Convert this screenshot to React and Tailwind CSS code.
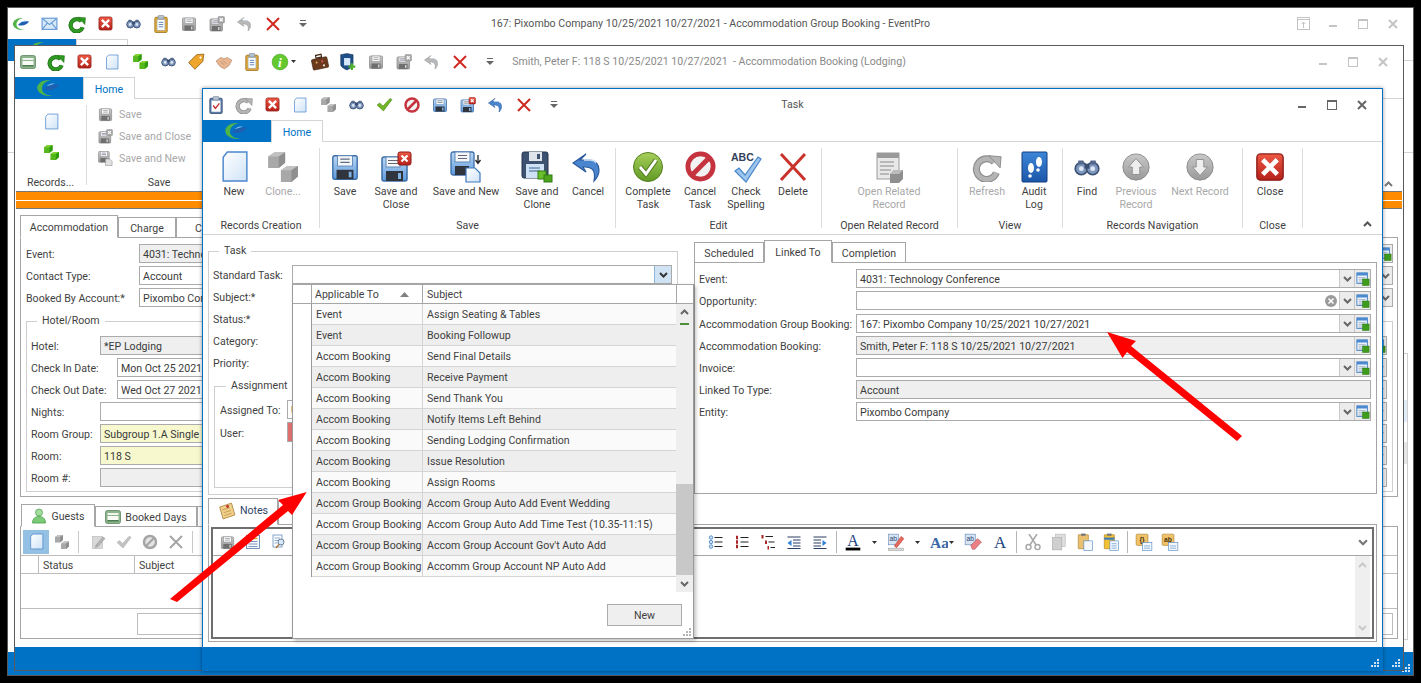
const Svg = ({ s = 16, w, h, vb = '0 0 32 32', children }) => (
  <svg width={w || s} height={h || s} viewBox={vb} className="block shrink-0">{children}</svg>
);

const Defs = () => (
  <svg width="0" height="0" className="absolute">
    <defs>
      <linearGradient id="gBlue" x1="0" y1="0" x2="0" y2="1"><stop offset="0" stopColor="#bcd8f3" /><stop offset="1" stopColor="#5d9ade" /></linearGradient>
      <linearGradient id="gPage" x1="0" y1="0" x2="1" y2="1"><stop offset="0" stopColor="#ffffff" /><stop offset="1" stopColor="#cfe3f7" /></linearGradient>
      <linearGradient id="gRed" x1="0" y1="0" x2="0" y2="1"><stop offset="0" stopColor="#ee5a45" /><stop offset="1" stopColor="#b5201a" /></linearGradient>
      <linearGradient id="gGreen" x1="0" y1="0" x2="0" y2="1"><stop offset="0" stopColor="#a6cf5a" /><stop offset="1" stopColor="#5f9a24" /></linearGradient>
      <linearGradient id="gGrey" x1="0" y1="0" x2="0" y2="1"><stop offset="0" stopColor="#c9c9c9" /><stop offset="1" stopColor="#999999" /></linearGradient>
      <linearGradient id="gBook" x1="0" y1="0" x2="0" y2="1"><stop offset="0" stopColor="#3d86d8" /><stop offset="1" stopColor="#1c56a8" /></linearGradient>
    </defs>
  </svg>
);

const Logo = ({ w = 18, h = 16 }) => (
  <Svg w={w} h={h} vb="0 0 36 30">
    <path d="M22 3C9 2 1 9 2 16c1 7 11 12 24 11-9-1-17-4-17-11S15 5 22 3z" fill="#4fb548" />
    <path d="M12 17c5-7 14-8 22-7-3 6-12 10-22 7z" fill="#1f5fb0" />
    <path d="M16 12c4-3 8-4 12-4-3 2-7 3-12 4z" fill="#8fc7ef" />
  </Svg>
);
const Mail = () => (
  <Svg s={17}><rect x="2" y="6" width="28" height="21" fill="#d6e8fa" stroke="#5b94d2" strokeWidth="2" /><path d="M3 7l13 11L29 7M3 26l9-11M29 26l-9-11" fill="none" stroke="#5b94d2" strokeWidth="2" /></Svg>
);
const Refresh = ({ s = 18, c = '#2f9a22', d = '#1c6d14' }) => (
  <Svg s={s}>
    <path d="M24 11A11 11 0 1 0 26 22" fill="none" stroke={d} strokeWidth="7.5" />
    <path d="M24 11A11 11 0 1 0 26 22" fill="none" stroke={c} strokeWidth="5" />
    <path d="M18 4l13 1-1 12z" fill={c} stroke={d} strokeWidth="1" />
  </Svg>
);
const RedBox = ({ s = 16 }) => (
  <Svg s={s}>
    <rect x="2" y="2" width="28" height="28" rx="4" fill="url(#gRed)" stroke="#8e1d16" strokeWidth="1.5" />
    <path d="M10 10l12 12M22 10L10 22" stroke="#fff" strokeWidth="5" strokeLinecap="square" />
  </Svg>
);
const Binoc = ({ s = 16 }) => (
  <Svg s={s}>
    <circle cx="9" cy="18" r="7.5" fill="#7e97bd" stroke="#3b4f72" strokeWidth="2" />
    <circle cx="23" cy="18" r="7.5" fill="#7e97bd" stroke="#3b4f72" strokeWidth="2" />
    <circle cx="9" cy="18" r="3" fill="#dfe8f4" /><circle cx="23" cy="18" r="3" fill="#dfe8f4" />
    <rect x="13" y="12" width="6" height="6" fill="#3b4f72" />
    <rect x="5" y="8" width="7" height="5" rx="1" fill="#56698c" /><rect x="20" y="8" width="7" height="5" rx="1" fill="#56698c" />
  </Svg>
);
const Clipboard = () => (
  <Svg s={18}>
    <rect x="5" y="4" width="22" height="27" rx="2" fill="#e0ab3c" stroke="#a2741c" strokeWidth="1.5" />
    <rect x="9" y="8" width="14" height="19" fill="#fff" stroke="#8aa3c4" />
    <rect x="11" y="1" width="10" height="6" rx="1" fill="#b9c4d2" stroke="#6e7c8f" />
    <path d="M12 13h8M12 17h8M12 21h8" stroke="#4f78b0" strokeWidth="1.6" />
  </Svg>
);
const ClipCheck = () => (
  <Svg s={18}>
    <rect x="5" y="4" width="22" height="27" rx="2" fill="#5d7ca8" stroke="#384f73" strokeWidth="1.5" />
    <rect x="8" y="8" width="16" height="20" fill="#fff" />
    <rect x="11" y="1" width="10" height="6" rx="1" fill="#b9c4d2" stroke="#6e7c8f" />
    <path d="M11 17l4 5 7-9" fill="none" stroke="#c4302b" strokeWidth="2.5" />
  </Svg>
);
const Floppy = ({ s = 16, grey }) => (
  <Svg s={s}>
    <rect x="3" y="4" width="26" height="25" rx="2" fill={grey ? 'url(#gGrey)' : 'url(#gBlue)'} stroke={grey ? '#8c8c8c' : '#3d6ea8'} strokeWidth="1.5" />
    <rect x="8" y="4" width="16" height="11" fill="#f4f6f8" stroke={grey ? '#8c8c8c' : '#5f87b8'} />
    <path d="M11 7.5h10M11 11h10" stroke={grey ? '#8c8c8c' : '#5f6f85'} strokeWidth="1.3" />
    <rect x="7" y="19" width="18" height="10" fill={grey ? '#6f6f6f' : '#30343c'} />
    <rect x="20" y="21" width="3" height="6" fill={grey ? '#d0d0d0' : '#7fb3e6'} />
  </Svg>
);
const FloppyX = ({ s = 16, grey }) => (
  <Svg s={s}>
    <rect x="2" y="6" width="25" height="24" rx="2" fill={grey ? 'url(#gGrey)' : 'url(#gBlue)'} stroke={grey ? '#8c8c8c' : '#3d6ea8'} strokeWidth="1.5" />
    <rect x="6" y="6" width="14" height="10" fill="#f4f6f8" stroke={grey ? '#8c8c8c' : '#5f87b8'} />
    <path d="M8 9.5h10M8 12.5h10" stroke="#667" strokeWidth="1.2" />
    <rect x="6" y="20" width="17" height="10" fill={grey ? '#6f6f6f' : '#30343c'} />
    <rect x="18" y="22" width="3" height="6" fill={grey ? '#d0d0d0' : '#7fb3e6'} />
    <rect x="18" y="1" width="13" height="13" rx="2" fill={grey ? '#a8a8a8' : 'url(#gRed)'} stroke={grey ? '#8c8c8c' : '#8e1d16'} />
    <path d="M21.5 4.5l6 6M27.5 4.5l-6 6" stroke="#fff" strokeWidth="2.2" />
  </Svg>
);
const FloppyNew = ({ s = 32, grey }) => (
  <Svg s={s}>
    <rect x="1" y="1" width="23" height="23" rx="2" fill={grey ? 'url(#gGrey)' : 'url(#gBlue)'} stroke={grey ? '#8c8c8c' : '#3d6ea8'} strokeWidth="1.3" />
    <rect x="5" y="1" width="15" height="10" fill="#f4f6f8" stroke={grey ? '#8c8c8c' : '#5f87b8'} />
    <path d="M8 4.5h9M8 7.5h9" stroke="#667" strokeWidth="1.2" />
    <rect x="5" y="15" width="14" height="9" fill={grey ? '#6f6f6f' : '#30343c'} />
    <path d="M16 17h9l5 5v9H16z" fill={grey ? '#e2e2e2' : 'url(#gPage)'} stroke={grey ? '#8c8c8c' : '#3d78bd'} strokeWidth="1.2" />
    {!grey && <path d="M28 4v7M25.5 9l2.5 3.5L30.5 9" fill="none" stroke="#222" strokeWidth="1.3" />}
  </Svg>
);
const FloppyClone = () => (
  <Svg s={32}>
    <rect x="1" y="1" width="26" height="26" rx="2" fill="#3d5170" stroke="#27364f" />
    <rect x="8" y="1" width="13" height="9" fill="#dfe4ea" /><rect x="16" y="3" width="3" height="5" fill="#3d5170" />
    <rect x="5" y="13" width="18" height="14" fill="#cfe1f4" /><path d="M8 17h11M8 20h11" stroke="#6c8db5" strokeWidth="1.3" />
    <rect x="17" y="20" width="8" height="8" fill="#6cbf2c" stroke="#2f7c12" /><rect x="23" y="24" width="8" height="7" fill="#4ea31a" stroke="#2f7c12" />
  </Svg>
);
const Undo = ({ s = 16, c = '#4a86d0', d = '#2a5a9c' }) => (
  <Svg s={s}>
    <path d="M8 9h9c7 0 10 5 10 10 0 4-2 8-5 11 1-5 1-8-1-11-2-2-5-3-8-3h-2l3 5L1 12 14 3z" fill={c} stroke={d} strokeWidth="1.2" />
    <path d="M12 9h6c3 0 5 1 6 3" fill="none" stroke="#cfe3f7" strokeWidth="1.5" />
  </Svg>
);
const BigX = ({ s = 16, sw = 4 }) => (
  <Svg s={s}><path d="M4 4l24 24M28 4L4 28" stroke="#cf2a22" strokeWidth={sw} /></Svg>
);
const QatMore = () => (
  <svg width="8" height="7" viewBox="0 0 8 7" className="block"><rect x="1" y="0" width="6" height="1" fill="#666" /><path d="M0 3h8L4 7z" fill="#666" /></svg>
);
const Doc = ({ s = 18 }) => (
  <Svg s={s}><path d="M9 2h19v28H5V7z" fill="url(#gPage)" stroke="#4b87cc" strokeWidth="1.4" /></Svg>
);
const Cubes = ({ s = 18, grey }) => {
  const a = grey ? '#c2c2c2' : '#7fd332', b = grey ? '#8f8f8f' : '#2f9c10', c = grey ? '#a8a8a8' : '#56b81c';
  const Cube = ({ x, y }) => (
    <g transform={`translate(${x} ${y})`}>
      <path d="M0 4l6-4h10v10l-6 5H0z" fill={c} /><path d="M0 4l6-4h10l-6 4z" fill={a} /><path d="M10 4l6-4v10l-6 5z" fill={b} />
    </g>
  );
  return <Svg s={s}><Cube x={2} y={2} /><Cube x={14} y={15} /></Svg>;
};
const Bed = ({ s = 16 }) => (
  <Svg s={s}>
    <rect x="1" y="3" width="30" height="26" rx="4" fill="#8db48a" stroke="#54805a" strokeWidth="1.5" />
    <rect x="5" y="8" width="22" height="4" fill="#f2f6f0" /><rect x="5" y="14" width="22" height="8" fill="#f8faf6" /><rect x="5" y="22" width="22" height="3" fill="#4d7c53" />
  </Svg>
);
const Tag = () => (
  <Svg s={18}><path d="M30 2L17 3 3 17l11 12 14-14z" fill="#eda52c" stroke="#8a5a10" strokeWidth="1.4" /><circle cx="24" cy="8" r="2" fill="#fff" /></Svg>
);
const Shake = () => (
  <Svg s={18}><path d="M2 14l8-6 6 2 6-2 8 5-5 9-8 6-7-3-5-6z" fill="#e8b690" stroke="#a67a5c" /><path d="M10 15l6 6M14 13l6 6" stroke="#a67a5c" /></Svg>
);
const Info = () => (
  <Svg s={18}><circle cx="16" cy="16" r="14" fill="#63c92f" stroke="#3e9a1a" /><text x="16" y="25" fontSize="24" fontStyle="italic" fontWeight="700" fill="#fff" textAnchor="middle" fontFamily="Liberation Serif, serif">i</text></Svg>
);
const Suitcase = () => (
  <Svg s={18}>
    <rect x="2" y="9" width="28" height="19" rx="2" fill="#6b3a1c" stroke="#3a1e0c" transform="rotate(-12 16 18)" />
    <rect x="11" y="3" width="10" height="5" fill="none" stroke="#3a1e0c" strokeWidth="2" transform="rotate(-12 16 18)" />
    <circle cx="10" cy="17" r="2" fill="#d89a5a" /><circle cx="20" cy="15" r="2" fill="#c55" /><circle cx="23" cy="22" r="2" fill="#ddd" />
  </Svg>
);
const Shield = () => (
  <Svg s={18}>
    <path d="M3 3l11-2 11 2v17c0 5-6 8-11 10C9 28 3 25 3 20z" fill="#1f4f86" stroke="#12345c" />
    <rect x="9" y="9" width="11" height="13" fill="#d6e8fa" />
    <path d="M23 18v12M17 24h12" stroke="#4fb02a" strokeWidth="4" />
  </Svg>
);
const CheckMark = ({ s = 18, c = '#6fb526', d = '#477d12' }) => (
  <Svg s={s}><path d="M2 17l5-4 6 6L27 4l3 3-16 21z" fill={c} stroke={d} strokeWidth="1" /></Svg>
);
const NoSign = ({ s = 18 }) => (
  <Svg s={s}>
    <circle cx="16" cy="16" r="13" fill="#f2f2f2" stroke="#c5343e" strokeWidth="5" />
    <path d="M7 25L25 7" stroke="#c5343e" strokeWidth="5" />
  </Svg>
);
const CheckCircle = () => (
  <Svg s={32}>
    <circle cx="16" cy="16" r="14.5" fill="url(#gGreen)" stroke="#567f22" />
    <path d="M8 16l6 7 10-14" fill="none" stroke="#567f22" strokeWidth="5" />
    <path d="M8 16l6 7 10-14" fill="none" stroke="#fff" strokeWidth="3" />
  </Svg>
);
const Spell = () => (
  <Svg s={32}>
    <text x="1" y="10" fontSize="10.5" fontWeight="700" fill="#33415c" fontFamily="Liberation Sans, sans-serif">ABC</text>
    <path d="M5 20l4-3 6 7L28 6l3 2-15 23z" fill="#9cc5ee" stroke="#4a86c8" strokeWidth="1.2" />
  </Svg>
);
const CrossThin = () => (
  <Svg s={32}><path d="M4 3l24 26M28 3L4 29" stroke="#c9332b" strokeWidth="3" /></Svg>
);
const OpenRel = () => (
  <Svg s={32}>
    <rect x="4" y="2" width="22" height="26" fill="#e8e8e8" stroke="#9c9c9c" />
    <rect x="4" y="2" width="22" height="5" fill="#9a9a9a" />
    <path d="M7 11h14M7 15h14M7 19h11M7 23h9" stroke="#a8a8a8" strokeWidth="1.4" />
    <path d="M17 23l4-4h9v9l-4 4h-9z" fill="#8f8f8f" /><path d="M17 23l4-4h9l-4 4z" fill="#bbb" />
  </Svg>
);
const AuditBook = () => (
  <Svg s={32}>
    <rect x="4" y="1" width="25" height="30" rx="1" fill="url(#gBook)" stroke="#123f82" />
    <ellipse cx="13" cy="17" rx="3" ry="5" fill="#fff" /><circle cx="12" cy="25" r="1.8" fill="#fff" />
    <ellipse cx="21" cy="11" rx="3" ry="5" fill="#fff" /><circle cx="20" cy="19" r="1.8" fill="#fff" />
  </Svg>
);
const ArrowCircle = ({ down }) => (
  <Svg s={30}>
    <circle cx="16" cy="16" r="14" fill="url(#gGrey)" stroke="#8c8c8c" />
    <path d={down ? 'M12 8h8v8h4l-8 9-8-9h4z' : 'M12 24h8v-8h4l-8-9-8 9h4z'} fill="#eeeeee" stroke="#8f8f8f" />
  </Svg>
);
const Lookup = () => (
  <Svg s={14}>
    <rect x="2" y="2" width="24" height="24" fill="#e9f1fa" stroke="#3f7cc0" strokeWidth="2" />
    <rect x="2" y="2" width="24" height="6" fill="#4a8ad0" />
    <path d="M6 13h16M6 18h16M6 23h10" stroke="#99a9bc" strokeWidth="2" />
    <rect x="15" y="16" width="15" height="15" fill="#3d9c1c" stroke="#22700c" />
  </Svg>
);
const Chev = ({ up, c = '#666666', w = 9, h = 6 }) => (
  <svg width={w} height={h} viewBox="0 0 9 6" className="block shrink-0">
    <path d={up ? 'M1 5l3.5-3.5L8 5' : 'M1 1l3.5 3.5L8 1'} fill="none" stroke={c} strokeWidth="2" />
  </svg>
);
const ClearX = () => (
  <svg width="12" height="12" viewBox="0 0 12 12" className="block shrink-0">
    <circle cx="6" cy="6" r="6" fill="#9a9a9a" /><path d="M3.5 3.5l5 5M8.5 3.5l-5 5" stroke="#fff" strokeWidth="1.5" />
  </svg>
);
const Grip = ({ c = '#b5b5b5' }) => (
  <svg width="9" height="9" viewBox="0 0 9 9" className="block">
    {[[6, 0], [3, 3], [6, 3], [0, 6], [3, 6], [6, 6]].map(([x, y]) => <rect key={`${x}${y}`} x={x} y={y} width="2" height="2" fill={c} />)}
  </svg>
);
const Person = () => (
  <Svg s={16}>
    <circle cx="16" cy="9" r="7" fill="#a4dca0" stroke="#4aa24a" strokeWidth="1.5" />
    <path d="M3 30c0-9 6-13 13-13s13 4 13 13z" fill="#7ccb78" stroke="#3f9a3f" strokeWidth="1.5" />
  </Svg>
);
const Sticky = () => (
  <Svg s={18}>
    <path d="M3 9l21-7 6 21-21 7z" fill="#f0d08a" stroke="#a67a34" strokeWidth="1.4" />
    <path d="M8 14l13-4M10 19l13-4M11 24l13-4" stroke="#b98c44" strokeWidth="1.3" />
    <circle cx="17" cy="8" r="2.5" fill="#c42f2f" />
  </Svg>
);
const ListDoc = () => (
  <Svg s={16}>
    <rect x="3" y="3" width="26" height="26" fill="#f7f9fc" stroke="#4f78b0" strokeWidth="1.6" />
    <path d="M7 9h18" stroke="#e8a52c" strokeWidth="3" /><path d="M7 15h18M7 20h18M7 25h18" stroke="#5b7fb4" strokeWidth="1.6" />
  </Svg>
);
const SearchDoc = () => (
  <Svg s={16}>
    <rect x="4" y="2" width="18" height="24" fill="#fff" stroke="#5a86bd" strokeWidth="1.5" />
    <path d="M7 8h11M7 13h8M7 18h6" stroke="#5a86bd" strokeWidth="1.4" />
    <circle cx="20" cy="16" r="6" fill="#d6e8fa" stroke="#6c7f94" strokeWidth="2" />
    <path d="M16 21l-6 7" stroke="#b5763a" strokeWidth="3" />
  </Svg>
);
const GreyEdit = () => (
  <Svg s={16}><rect x="5" y="5" width="20" height="24" fill="#d8d8d8" stroke="#aaa" /><path d="M12 22l14-16 4 3-14 16-5 2z" fill="#b5b5b5" stroke="#8c8c8c" /></Svg>
);
const GreyNo = () => (
  <Svg s={16}><circle cx="16" cy="16" r="12" fill="#e5e5e5" stroke="#a6a6a6" strokeWidth="5" /><path d="M8 24L24 8" stroke="#a6a6a6" strokeWidth="4.5" /></Svg>
);
const GreyX = () => (
  <Svg s={16}><path d="M4 4l24 24M28 4L4 28" stroke="#a6a6a6" strokeWidth="4" /></Svg>
);

const Lines = ({ kind }) => {
  const d = kind === 'out' ? 'M3 6h26M14 12h15M14 18h15M14 24h15M3 29h26' : 'M3 6h26M3 12h15M3 18h15M3 24h15M3 29h26';
  const arrow = kind === 'out' ? 'M11 12v12l-8-6z' : 'M21 12v12l8-6z';
  return <Svg s={16}><path d={d} stroke="#2a3f62" strokeWidth="2.4" /><path d={arrow} fill="#2f7fd8" /></Svg>;
};
const ListIcon = ({ dots }) => (
  <Svg s={16}>
    <path d="M13 7h16M13 16h16M13 25h16" stroke="#222" strokeWidth="2.2" />
    {dots
      ? [7, 16, 25].map(y => <circle key={y} cx="6" cy={y} r="3.5" fill="#cfe3f7" stroke="#3f7cc0" strokeWidth="1.6" />)
      : [7, 16, 25].map(y => <rect key={y} x="4" y={y - 3.5} width="4" height="7" fill="#a82626" />)}
  </Svg>
);
const Multi = () => (
  <Svg s={16}>
    <path d="M11 5h15M17 16h12M21 27h9" stroke="#222" strokeWidth="2.2" />
    <rect x="3" y="2" width="4" height="7" fill="#a82626" /><rect x="10" y="13" width="4" height="7" fill="#a82626" /><rect x="15" y="24" width="3" height="7" fill="#a82626" />
  </Svg>
);
const ColorA = () => (
  <Svg s={18}>
    <text x="16" y="23" fontSize="28" fill="#1d4585" textAnchor="middle" fontFamily="Liberation Serif, serif">A</text>
    <rect x="3" y="26" width="26" height="5" fill="#000" />
  </Svg>
);
const Highlight = () => (
  <Svg s={18}>
    <rect x="3" y="2" width="17" height="19" fill="#d6e4f4" stroke="#5a7fb0" />
    <text x="11" y="15" fontSize="12" fill="#30456c" textAnchor="middle" fontFamily="Liberation Sans, sans-serif">ab</text>
    <path d="M13 23l12-17 5 4-13 16z" fill="#e86a5c" stroke="#b23a30" />
    <rect x="3" y="27" width="26" height="4" fill="#ddd" stroke="#999" />
  </Svg>
);
const FontCase = () => (
  <svg width="18" height="16" viewBox="0 0 36 32" className="block shrink-0">
    <text x="0" y="27" fontSize="31" fontWeight="700" fill="#3a68a8" fontFamily="Liberation Serif, serif">Aa</text>
  </svg>
);
const Eraser = () => (
  <Svg s={18}>
    <rect x="2" y="2" width="18" height="19" fill="#d6e4f4" stroke="#5a7fb0" />
    <text x="11" y="15" fontSize="12" fill="#30456c" textAnchor="middle" fontFamily="Liberation Sans, sans-serif">ab</text>
    <path d="M12 22l12-12 7 6-12 13h-4z" fill="#ec7f86" stroke="#a8494f" />
  </Svg>
);
const PlainA = () => (
  <Svg s={18}><text x="16" y="27" fontSize="30" fill="#1d4585" textAnchor="middle" fontFamily="Liberation Serif, serif">A</text></Svg>
);
const Scissors = () => (
  <Svg s={18}>
    <path d="M9 2l13 20M23 2L10 22" stroke="#a8a8a8" strokeWidth="3" />
    <circle cx="8" cy="25" r="4.5" fill="none" stroke="#a8a8a8" strokeWidth="2.5" /><circle cx="24" cy="25" r="4.5" fill="none" stroke="#a8a8a8" strokeWidth="2.5" />
  </Svg>
);
const Copy = () => (
  <Svg s={18}><rect x="10" y="2" width="17" height="22" fill="#dedede" stroke="#b0b0b0" /><rect x="4" y="8" width="17" height="22" fill="#cfcfcf" stroke="#a8a8a8" /></Svg>
);
const Paste = ({ special }) => (
  <Svg s={18}>
    <rect x="4" y="3" width="18" height="25" rx="1" fill={special ? '#f2c230' : '#e8c070'} stroke="#a2741c" />
    <rect x="9" y="1" width="8" height="4" fill="#777" />
    {special && <rect x="4" y="8" width="18" height="4" fill="#3f7cc0" />}
    <rect x="14" y="14" width="15" height="17" fill="#f4f8fd" stroke="#3f7cc0" />
    {special && <path d="M17 19h9M17 23h9M17 27h9" stroke="#3f7cc0" />}
  </Svg>
);
const CodeNote = ({ t }) => (
  <Svg s={18}>
    <rect x="2" y="2" width="21" height="20" rx="2" fill="#f0c26a" stroke="#a2741c" />
    <text x="12.5" y="16" fontSize="12" fontWeight="700" fill="#4a3410" textAnchor="middle" fontFamily="Liberation Sans, sans-serif">{t}</text>
    <rect x="13" y="17" width="17" height="14" fill="#f4f8fd" stroke="#3f7cc0" />
    <path d="M16 23h11M16 27h11" stroke="#3f7cc0" />
  </Svg>
);

const Qat = ({ items }) => (
  <div className="flex items-center -ml-px">
    {items.map((it, i) => (
      <div key={i} className={it.cls || 'w-[28px] flex justify-center'}>{it.el}</div>
    ))}
  </div>
);

const Controls = ({ c, restore }) => (
  <div className="flex justify-end items-center pr-[5px]">
    {restore && (
      <div className="w-[30px] flex justify-center">
        <svg width="13" height="13" viewBox="0 0 13 13"><rect x=".5" y=".5" width="12" height="12" fill="none" stroke={c} /><path d="M1 2.5h11M6.5 11V5M4.5 7l2-2 2 2" fill="none" stroke={c} /></svg>
      </div>
    )}
    <div className="w-[30px] flex justify-center">
      <svg width="9" height="10" viewBox="0 0 9 10"><rect x="0" y="6" width="8" height="2" fill={c} /></svg>
    </div>
    <div className="w-[30px] flex justify-center">
      <svg width="10" height="10" viewBox="0 0 10 10"><rect x=".5" y=".5" width="9" height="9" fill="none" stroke={c} /><rect x="0" y="0" width="10" height="2" fill={c} /></svg>
    </div>
    <div className="w-[30px] flex justify-center">
      <svg width="10" height="10" viewBox="0 0 10 10"><path d="M1 1l8 8M9 1L1 9" stroke={c} strokeWidth="2" /></svg>
    </div>
  </div>
);

const TitleBar = ({ items, title, titleCls, ctl, restore }) => (
  <div className="grid grid-cols-[1fr_auto_1fr] items-center h-[31px] shrink-0">
    <Qat items={items} />
    <div className={`whitespace-pre text-center ${titleCls}`}>{title}</div>
    <Controls c={ctl} restore={restore} />
  </div>
);

const HomeRow = () => (
  <div className="flex h-[22px] shrink-0 border-b border-[#d4d4d4]">
    <div className="w-[68px] h-[22px] bg-[#0072c6] flex items-center justify-center pr-[2px]"><Logo w={26} h={20} /></div>
    <div className="w-[52px] h-[22px] pt-px bg-white border border-b-0 border-[#d4d4d4] flex items-center justify-center text-[#0072c6]">Home</div>
  </div>
);

const RBtn = ({ cls, icon, label, dis }) => (
  <div className={`flex flex-col items-center shrink-0 ${cls}`}>
    <div className="h-[37px] flex items-center justify-center">{icon}</div>
    <div className={`text-center leading-[13px] whitespace-pre-line ${dis ? 'text-[#a8a8a8]' : 'text-[#3f3f3f]'}`}>{label}</div>
  </div>
);

const RGroup = ({ cls, rowCls = '', label, children }) => (
  <div className={`h-[80px] mt-[6px] border-r border-[#dcdcdc] flex flex-col shrink-0 ${cls}`}>
    <div className={`h-[71px] flex shrink-0 ${rowCls}`}>{children}</div>
    <div className="text-center leading-[14px] text-[#3f3f3f] whitespace-nowrap">{label}</div>
  </div>
);

const TaskRibbon = () => (
  <div className="relative flex h-[93px] shrink-0 border-b border-[#d4d4d4]">
    <RGroup cls="w-[117px]" rowCls="pl-[8px]" label="Records Creation">
      <RBtn cls="w-[46px]" icon={<Doc s={33} />} label="New" />
      <RBtn cls="w-[52px]" icon={<Cubes s={34} grey />} label="Clone..." dis />
    </RGroup>
    <RGroup cls="w-[296px]" label="Save">
      <RBtn cls="w-[50px]" icon={<Floppy s={30} />} label="Save" />
      <RBtn cls="w-[52px]" icon={<FloppyX s={32} />} label={'Save and\nClose'} />
      <RBtn cls="w-[88px]" icon={<FloppyNew />} label="Save and New" />
      <RBtn cls="w-[54px]" icon={<FloppyClone />} label={'Save and\nClone'} />
      <RBtn cls="w-[48px]" icon={<Undo s={32} />} label="Cancel" />
    </RGroup>
    <RGroup cls="w-[206px]" label="Edit">
      <RBtn cls="w-[64px]" icon={<CheckCircle />} label={'Complete\nTask'} />
      <RBtn cls="w-[40px]" icon={<NoSign s={31} />} label={'Cancel\nTask'} />
      <RBtn cls="w-[52px]" icon={<Spell />} label={'Check\nSpelling'} />
      <RBtn cls="w-[42px]" icon={<CrossThin />} label="Delete" />
    </RGroup>
    <RGroup cls="w-[136px]" label="Open Related Record">
      <RBtn cls="w-[134px]" icon={<OpenRel />} label={'Open Related\nRecord'} dis />
    </RGroup>
    <RGroup cls="w-[105px]" label="View">
      <RBtn cls="w-[58px]" icon={<Refresh s={30} c="#b4b4b4" d="#8c8c8c" />} label="Refresh" dis />
      <RBtn cls="w-[36px]" icon={<AuditBook />} label={'Audit\nLog'} />
    </RGroup>
    <RGroup cls="w-[180px]" label="Records Navigation">
      <RBtn cls="w-[48px]" icon={<Binoc s={26} />} label="Find" />
      <RBtn cls="w-[50px]" icon={<ArrowCircle />} label={'Previous\nRecord'} dis />
      <RBtn cls="w-[78px]" icon={<ArrowCircle down />} label="Next Record" dis />
    </RGroup>
    <RGroup cls="w-[60px]" label="Close">
      <RBtn cls="w-[54px]" icon={<RedBox s={30} />} label="Close" />
    </RGroup>
    <div className="flex-1 flex justify-end items-end pb-[7px] pr-[10px]"><Chev up c="#555" /></div>
  </div>
);

const Tab = ({ cls, active, children }) => (
  <div className={`flex items-center justify-center gap-[4px] border border-[#a6a6a6] shrink-0 text-[#3f3f3f] pt-px ${active ? 'h-[23px] border-b-white bg-white' : 'h-[21px]'} ${cls}`}>{children}</div>
);

const Input = ({ tone, value, drop, look, clear, cls = '' }) => {
  const bg = tone === 'grey' ? 'bg-[#efefef]' : tone === 'yellow' ? 'bg-[#f8f8cf]' : 'bg-white';
  return (
    <div className={`h-[19px] border border-[#ababab] flex items-center min-w-0 text-[#3a3a3a] ${bg} ${cls}`}>
      <span className="flex-1 pl-[3px] pt-px whitespace-nowrap overflow-hidden">{value}</span>
      {clear && <span className="mr-[2px]"><ClearX /></span>}
      {drop && <span className="w-[15px] h-full bg-[#ececec] border-l border-[#c8c8c8] flex items-center justify-center"><Chev /></span>}
      {look && <span className="w-[16px] h-full bg-[#ececec] border-l border-[#c8c8c8] flex items-center justify-center"><Lookup /></span>}
    </div>
  );
};

const Field = ({ label, lw, rowCls = '', ...rest }) => (
  <div className={`flex items-center h-[19px] ${rowCls}`}>
    <div className={`shrink-0 pt-[2px] whitespace-nowrap text-[#3f3f3f] ${lw}`}>{label}</div>
    <Input cls="flex-1" {...rest} />
  </div>
);

const Legend = ({ children }) => <legend className="ml-[6px] px-[5px] h-[14px] leading-[14px] text-[#3f3f3f]">{children}</legend>;

const win1Icons = [
  { el: <Logo /> }, { el: <Mail /> }, { el: <Refresh /> }, { el: <RedBox s={15} /> }, { el: <Binoc s={15} /> },
  { el: <Clipboard /> }, { el: <Floppy s={16} grey /> }, { el: <FloppyX s={16} grey /> }, { el: <Undo c="#b8b8b8" d="#9a9a9a" /> }, { el: <BigX /> },
  { el: <QatMore />, cls: 'w-[32px] flex justify-center' },
];
const win2Icons = [
  { el: <Bed /> }, { el: <Refresh /> }, { el: <RedBox s={15} /> }, { el: <Doc s={16} /> }, { el: <Cubes s={17} /> }, { el: <Binoc s={15} /> },
  { el: <Tag /> }, { el: <Shake /> }, { el: <Clipboard /> }, { el: <Info /> },
  { el: <svg width="5" height="3" viewBox="0 0 5 3"><path d="M0 0h5L2.5 3z" fill="#333" /></svg>, cls: 'w-[12px] flex justify-center -ml-[7px] mr-[7px]' },
  { el: <Suitcase /> }, { el: <Shield /> }, { el: <Floppy s={16} grey /> }, { el: <FloppyX s={16} grey /> }, { el: <Undo c="#b8b8b8" d="#9a9a9a" /> }, { el: <BigX /> },
  { el: <QatMore />, cls: 'w-[32px] flex justify-center' },
];
const win3Icons = [
  { el: <ClipCheck /> }, { el: <Refresh c="#b4b4b4" d="#8c8c8c" /> }, { el: <RedBox s={15} /> }, { el: <Doc s={16} /> }, { el: <Cubes s={17} grey /> }, { el: <Binoc s={15} /> },
  { el: <CheckMark s={17} /> }, { el: <NoSign s={16} /> }, { el: <Floppy s={16} /> }, { el: <FloppyX s={16} /> }, { el: <Undo /> }, { el: <BigX /> },
  { el: <QatMore />, cls: 'w-[32px] flex justify-center' },
];

const Window1 = () => (
  <div className="absolute left-[7px] top-[7px] w-[1407px] h-[669px] bg-white border border-[#5a5a5a] flex flex-col">
    <TitleBar items={win1Icons} title="167: Pixombo Company 10/25/2021 10/27/2021 - Accommodation Group Booking - EventPro" titleCls="text-[#555]" ctl="#c4c4c4" restore />
    <HomeRow />
    <div className="h-[92px] shrink-0 border-b border-[#d4d4d4]" />
    <div className="flex-1 flex justify-end pr-[5px] pt-[200px]">
      <div className="w-[20px] h-[287px] border border-[#cfcfcf] flex flex-col">
        <div className="h-[46px]" />
        <div className="h-[22px] bg-[#e0ecf8]" />
        <div className="h-[20px]" />
        <div className="h-[22px] bg-[#e5e5e5]" />
      </div>
    </div>
    <div className="h-[23px] shrink-0 bg-[#0072c6] flex items-end justify-end pr-[2px] pb-[2px]"><Grip c="#cfe3f5" /></div>
  </div>
);

const Window2 = () => (
  <div className="absolute left-[14px] top-[45px] w-[1390px] h-[626px] bg-white border border-[#5a5a5a] flex flex-col">
    <TitleBar items={win2Icons} title="Smith, Peter F: 118 S 10/25/2021 10/27/2021  - Accommodation Booking (Lodging)" titleCls="text-[#8a8a8a]" ctl="#c4c4c4" />
    <HomeRow />
    <div className="flex h-[92px] shrink-0">
      <div className="h-[80px] mt-[6px] w-[72px] border-r border-[#dcdcdc] flex flex-col items-center">
        <div className="h-[71px] flex flex-col items-center gap-[14px] pt-[8px] pl-[2px] shrink-0">
          <Doc s={17} /><Cubes s={17} />
        </div>
        <div className="leading-[14px] text-[#3f3f3f]">Records...</div>
      </div>
      <div className="h-[80px] mt-[6px] w-[144px] flex flex-col">
        <div className="h-[71px] flex flex-col gap-[6px] pl-[11px] pt-px text-[#a8a8a8] shrink-0">
          <div className="flex items-center gap-[6px] h-[16px]"><Floppy s={15} grey />Save</div>
          <div className="flex items-center gap-[6px] h-[16px]"><FloppyX s={15} grey />Save and Close</div>
          <div className="flex items-center gap-[6px] h-[16px]"><FloppyNew s={15} grey />Save and New</div>
        </div>
        <div className="text-center leading-[14px] text-[#3f3f3f]">Save</div>
      </div>
      <div className="flex-1 flex justify-end items-end pb-[4px] pr-[10px]"><Chev up c="#777" /></div>
    </div>
    <div className="h-[18px] shrink-0 border-y border-[#777] mx-px flex flex-col">
      <div className="h-[8px] bg-[#ff8c00]" />
      <div className="flex-1 bg-[#ff8c00] border-t border-white" />
    </div>
    <div className="flex-1 px-[5px] pt-[6px] flex flex-col min-h-0">
      <div className="flex items-end -mb-px relative">
        <Tab cls="w-[98px]" active>Accommodation</Tab>
        <Tab cls="w-[58px]">Charge</Tab>
        <Tab cls="w-[60px]">Cost</Tab>
      </div>
      <div className="h-[260px] border border-[#a6a6a6] pt-[6px] pl-[5px] pr-[4px] shrink-0 flex flex-col gap-[3px]">
        <Field label="Event:" lw="w-[113px]" tone="grey" value="4031: Technology Conference" look />
        <Field label="Contact Type:" lw="w-[113px]" value="Account" drop />
        <Field label="Booked By Account:*" lw="w-[113px]" value="Pixombo Company" drop />
        <fieldset className="mt-[4px] h-[178px] border border-[#cfcfcf] pl-[4px] pr-[5px] pt-[8px] flex flex-col gap-[3px] min-w-0">
          <Legend>Hotel/Room</Legend>
          <div className="flex flex-col gap-[3px]">
            <Field label="Hotel:" lw="w-[69px]" tone="grey" value="*EP Lodging" look />
            <Field label="Check In Date:" lw="w-[86px]" value="Mon Oct 25 2021" drop />
            <Field label="Check Out Date:" lw="w-[86px]" value="Wed Oct 27 2021" drop />
            <Field label="Nights:" lw="w-[69px]" drop />
            <Field label="Room Group:" lw="w-[69px]" tone="yellow" value="Subgroup 1.A Single" drop />
            <Field label="Room:" lw="w-[69px]" tone="yellow" value="118 S" drop />
            <Field label="Room #:" lw="w-[69px]" tone="grey" />
          </div>
        </fieldset>
      </div>
      <div className="flex items-end mt-[7px] -mb-px ml-px relative">
        <Tab cls="w-[74px]" active><Person />Guests</Tab>
        <Tab cls="w-[102px]"><Bed />Booked Days</Tab>
        <Tab cls="w-[60px]">Notes</Tab>
      </div>
      <div className="h-[113px] border border-[#a6a6a6] flex flex-col shrink-0">
        <div className="h-[28px] flex items-center pl-[2px] pt-px shrink-0">
          <div className="w-[26px] h-[24px] bg-[#93c0e3] flex items-center justify-center"><Doc s={17} /></div>
          <div className="w-[26px] flex justify-center"><Cubes s={16} grey /></div>
          <div className="w-px h-[22px] bg-[#c8c8c8] mx-[3px]" />
          <div className="w-[26px] flex justify-center ml-[3px]"><GreyEdit /></div>
          <div className="w-[26px] flex justify-center"><CheckMark s={16} c="#c2c2c2" d="#a6a6a6" /></div>
          <div className="w-[26px] flex justify-center"><GreyNo /></div>
          <div className="w-[26px] flex justify-center"><GreyX /></div>
          <div className="w-px h-[22px] bg-[#c8c8c8] mx-[3px]" />
        </div>
        <div className="h-[19px] flex border-y border-[#bdbdbd] shrink-0 text-[#3f3f3f]">
          <div className="w-[18px] border-r border-[#bdbdbd]" />
          <div className="w-[96px] border-r border-[#bdbdbd] pl-[4px] pt-[2px] flex items-center">Status</div>
          <div className="flex-1 pl-[4px] pt-[2px] flex items-center">Subject</div>
        </div>
        <div className="h-[35px] shrink-0 border-b border-[#bdbdbd]" />
        <div className="flex-1 flex items-center pl-[116px] pr-[4px]">
          <div className="flex-1 h-[22px] border border-[#bdbdbd]" />
        </div>
      </div>
    </div>
    <div className="h-[23px] shrink-0 bg-[#0072c6] flex items-end justify-end pr-[2px] pb-[2px]"><Grip c="#cfe3f5" /></div>
  </div>
);

const rows = [
  ['Event', 'Assign Seating & Tables'],
  ['Event', 'Booking Followup'],
  ['Accom Booking', 'Send Final Details'],
  ['Accom Booking', 'Receive Payment'],
  ['Accom Booking', 'Send Thank You'],
  ['Accom Booking', 'Notify Items Left Behind'],
  ['Accom Booking', 'Sending Lodging Confirmation'],
  ['Accom Booking', 'Issue Resolution'],
  ['Accom Booking', 'Assign Rooms'],
  ['Accom Group Booking', 'Accom Group Auto Add Event Wedding'],
  ['Accom Group Booking', 'Accom Group Auto Add Time Test (10.35-11:15)'],
  ['Accom Group Booking', "Accom Group Account Gov't Auto Add"],
  ['Accom Group Booking', 'Accomm Group Account NP Auto Add'],
];

const Popup = () => (
  <div className="absolute left-[89px] top-[195px] w-[402px] h-[355px] bg-white border border-t-0 border-[#9a9a9a] shadow-[2px_2px_4px_rgba(0,0,0,0.25)] flex flex-col text-[#3f3f3f]">
    <div className="h-[20px] flex border-y border-[#a6a6a6] shrink-0">
      <div className="w-[19px] border-r border-[#a6a6a6]" />
      <div className="w-[111px] border-r border-[#a6a6a6] flex items-center justify-between pl-[3px] pr-[13px]">
        <span>Applicable To</span>
        <svg width="9" height="5" viewBox="0 0 9 5"><path d="M0 5h9L4.5 0z" fill="#808080" /></svg>
      </div>
      <div className="w-[254px] border-r border-[#a6a6a6] flex items-center pl-[4px]">Subject</div>
    </div>
    <div className="flex h-[288px] shrink-0">
      <div className="w-[383px] pl-[18px]">
        <div className="border-l border-[#9a9a9a]">
          {rows.map(([a, b], i) => (
            <div key={b} className={`h-[21px] flex border-b border-[#d4d4d4] ${i % 2 ? 'bg-[#eeeeee]' : 'bg-[#fafafa]'}`}>
              <div className="w-[111px] border-r border-[#d4d4d4] pl-[4px] flex items-center whitespace-nowrap">{a}</div>
              <div className="flex-1 pl-[4px] flex items-center whitespace-nowrap">{b}</div>
            </div>
          ))}
        </div>
      </div>
      <div className="w-[17px] bg-[#eeeeee] flex flex-col items-center">
        <div className="h-[16px] flex items-center justify-center"><Chev up /></div>
        <div className="w-[9px] h-[2px] mt-[3px] bg-[#4e8f3a]" />
        <div className="flex-1" />
        <div className="w-full h-[91px] bg-[#c8c8c8]" />
        <div className="h-[17px] flex items-center justify-center"><Chev /></div>
      </div>
    </div>
    <div className="flex-1 flex justify-end items-start pt-[12px] pr-[11px] relative">
      <div className="w-[75px] h-[22px] bg-[#efefef] border border-[#ababab] flex items-center justify-center">New</div>
      <div className="absolute right-[1px] bottom-[1px]"><Grip /></div>
    </div>
  </div>
);

const TaskLeft = () => (
  <div className="w-[470px] shrink-0 mt-[4px]">
    <fieldset className="h-[251px] border border-[#cfcfcf] pl-[4px] pr-[5px] pt-[7px] min-w-0">
      <Legend>Task</Legend>
      <div className="flex flex-col gap-[3px]">
        <div className="flex items-center h-[19px]">
          <div className="w-[79px] shrink-0 pt-[2px] text-[#3f3f3f] whitespace-nowrap">Standard Task:</div>
          <div className="flex-1 h-[19px] border border-[#ababab] flex justify-end">
            <span className="w-[17px] h-full bg-[#cfe3f5] border-l border-[#8fb6d8] flex items-center justify-center"><Chev c="#333" /></span>
          </div>
        </div>
        {['Subject:*', 'Status:*', 'Category:', 'Priority:'].map(l => (
          <Field key={l} label={l} lw="w-[79px]" />
        ))}
      </div>
      <fieldset className="mt-[7px] ml-px h-[109px] border border-[#cfcfcf] pl-[5px] pr-[5px] pt-[7px] min-w-0">
        <Legend>Assignment</Legend>
        <div className="flex items-center h-[19px]">
          <div className="w-[67px] shrink-0 pt-[2px] text-[#3f3f3f]">Assigned To:</div>
          <Input cls="flex-1" value="U" />
        </div>
        <div className="flex items-center h-[20px] mt-[3px]">
          <div className="w-[67px] shrink-0 pt-[2px] text-[#3f3f3f]">User:</div>
          <div className="flex-1 h-[20px] bg-[#e07070] border border-[#ababab]" />
        </div>
      </fieldset>
    </fieldset>
  </div>
);

const TaskRight = () => (
  <div className="ml-[16px] w-[683px] shrink-0 flex flex-col">
    <div className="flex items-end -mb-px relative">
      <Tab cls="w-[70px]">Scheduled</Tab>
      <Tab cls="w-[68px]" active>Linked To</Tab>
      <Tab cls="w-[74px]">Completion</Tab>
    </div>
    <div className="h-[232px] border border-[#a6a6a6] pt-[6px] pl-[4px] pr-[5px] flex flex-col gap-[3px]">
      <Field label="Event:" lw="w-[157px]" value="4031: Technology Conference" drop look />
      <Field label="Opportunity:" lw="w-[157px]" clear drop look />
      <Field label="Accommodation Group Booking:" lw="w-[157px]" rowCls="mt-px" value="167: Pixombo Company 10/25/2021 10/27/2021" drop look />
      <Field label="Accommodation Booking:" lw="w-[157px]" tone="grey" value="Smith, Peter F: 118 S 10/25/2021 10/27/2021" look />
      <Field label="Invoice:" lw="w-[157px]" drop look />
      <Field label="Linked To Type:" lw="w-[157px]" tone="grey" value="Account" />
      <Field label="Entity:" lw="w-[157px]" value="Pixombo Company" drop look />
    </div>
  </div>
);

const caret = <svg width="5" height="3" viewBox="0 0 5 3"><path d="M0 0h5L2.5 3z" fill="#333" /></svg>;
const Tool = ({ children, cls = '' }) => <div className={`w-[26px] flex justify-center shrink-0 ${cls}`}>{children}</div>;
const Sep = () => <div className="w-px h-[22px] bg-[#b5b5b5] mx-[3px] shrink-0" />;

const NotesPanel = () => (
  <div className="mt-[2px] w-[1169px] ml-[5px] flex flex-col">
    <div className="flex items-end -mb-px relative">
      <Tab cls="w-[70px] !h-[27px] !pt-0 pb-[2px]" active><Sticky /><span className="text-[#2f4468]">Notes</span></Tab>
      <Tab cls="w-[60px] !h-[24px]" />
    </div>
    <div className="h-[118px] border border-[#a6a6a6] p-[2px]">
      <div className="h-full border-2 border-[#6e6e6e] flex flex-col">
        <div className="h-[27px] border-b border-[#a6a6a6] flex items-center shrink-0">
          <Tool cls="ml-[1px]"><Floppy s={15} grey /></Tool>
          <Tool><ListDoc /></Tool>
          <Tool><SearchDoc /></Tool>
          <div className="w-[411px] shrink-0" />
          <Tool><ListIcon dots /></Tool>
          <Tool><ListIcon /></Tool>
          <Tool><Multi /></Tool>
          <Tool><Lines kind="out" /></Tool>
          <Tool><Lines kind="in" /></Tool>
          <Sep />
          <Tool><ColorA /></Tool>
          <div className="w-[17px] flex justify-center shrink-0">{caret}</div>
          <Tool><Highlight /></Tool>
          <div className="w-[17px] flex justify-center shrink-0">{caret}</div>
          <Tool><FontCase /></Tool>
          <div className="w-[11px] -ml-[3px] flex justify-start shrink-0">{caret}</div>
          <Tool><Eraser /></Tool>
          <Tool cls="ml-px"><PlainA /></Tool>
          <Sep />
          <Tool><Scissors /></Tool>
          <Tool><Copy /></Tool>
          <Tool><Paste /></Tool>
          <Tool><Paste special /></Tool>
          <Sep />
          <Tool><CodeNote t="{}" /></Tool>
          <Tool><CodeNote t="ab" /></Tool>
          <div className="flex-1 flex justify-end pr-[4px]"><Chev c="#777" w={10} h={7} /></div>
        </div>
        <div className="flex-1 flex justify-end pr-[2px]">
          <div className="w-[15px] bg-[#efefef] flex flex-col items-center justify-between py-[6px]">
            <Chev up c="#c9c9c9" /><Chev c="#c9c9c9" />
          </div>
        </div>
      </div>
    </div>
  </div>
);

const Window3 = () => (
  <div className="absolute left-[202px] top-[88px] w-[1181px] h-[583px] bg-white border border-[#0072c6] shadow-[0_0_4px_rgba(0,0,0,0.4)] flex flex-col">
    <TitleBar items={win3Icons} title="Task" titleCls="text-[#555]" ctl="#666" />
    <HomeRow />
    <TaskRibbon />
    <div className="flex-1 min-h-0 flex flex-col">
      <div className="flex pl-[5px] pt-[5px] h-[261px] shrink-0">
        <TaskLeft />
        <TaskRight />
      </div>
      <NotesPanel />
    </div>
    <div className="h-[23px] shrink-0 bg-[#0072c6] flex items-end justify-end pr-[2px] pb-[2px]"><Grip c="#cfe3f5" /></div>
    <Popup />
  </div>
);

const Arrows = () => (
  <svg width="1421" height="683" viewBox="0 0 1421 683" className="absolute left-0 top-0 pointer-events-none">
    <polygon points="170,599 177,602 288,511 292,515 306.7,492 278,500 283,505" fill="#ff0000" />
    <polygon points="1107,332 1136,341 1131,346 1242,436 1237,441 1127,352 1122.5,358" fill="#ff0000" />
  </svg>
);

export default function App() {
  return (
    <div className="relative w-[1421px] h-[683px] overflow-hidden bg-black font-['Roboto','Liberation_Sans',sans-serif] text-[10.6px] leading-[13px]">
      <Defs />
      <Window1 />
      <Window2 />
      <Window3 />
      <Arrows />
    </div>
  );
}
